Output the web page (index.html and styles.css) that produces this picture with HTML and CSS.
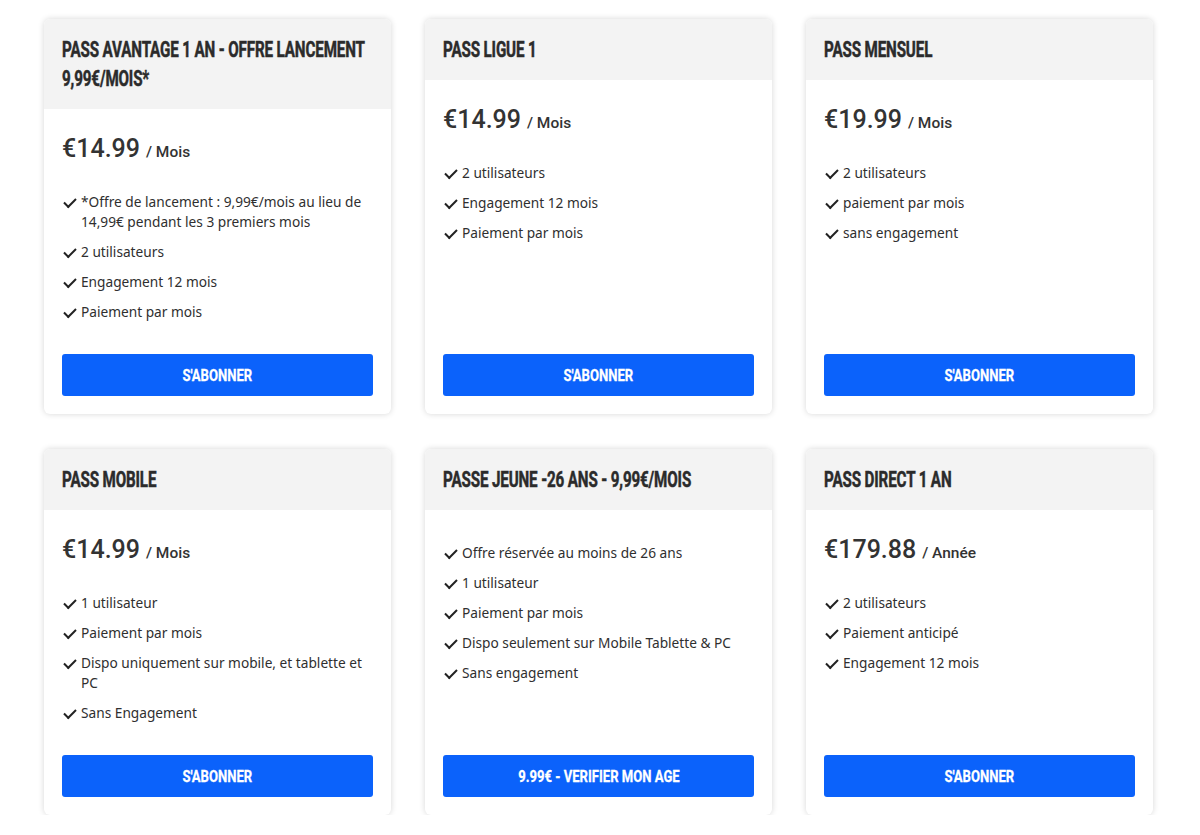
FILE: index.html
```html
<!DOCTYPE html>
<html lang="fr">
<head>
<meta charset="utf-8">
<title>Offres</title>
<link rel="stylesheet" href="styles.css">
</head>
<body>
<main class="grid">
  <section class="card">
    <h2 class="card-title"><span class="title-text">PASS AVANTAGE 1 AN - OFFRE LANCEMENT 9,99€/MOIS*</span></h2>
    <div class="card-body">
      <p class="price"><span class="amount">€14.99</span> <span class="period">/ Mois</span></p>
      <ul class="features">
        <li>*Offre de lancement : 9,99€/mois au lieu de 14,99€ pendant les 3 premiers mois</li>
        <li>2 utilisateurs</li>
        <li>Engagement 12 mois</li>
        <li>Paiement par mois</li>
      </ul>
      <button class="cta"><span class="cta-text">S'ABONNER</span></button>
    </div>
  </section>
  <section class="card">
    <h2 class="card-title"><span class="title-text">PASS LIGUE 1</span></h2>
    <div class="card-body">
      <p class="price"><span class="amount">€14.99</span> <span class="period">/ Mois</span></p>
      <ul class="features">
        <li>2 utilisateurs</li>
        <li>Engagement 12 mois</li>
        <li>Paiement par mois</li>
      </ul>
      <button class="cta"><span class="cta-text">S'ABONNER</span></button>
    </div>
  </section>
  <section class="card">
    <h2 class="card-title"><span class="title-text">PASS MENSUEL</span></h2>
    <div class="card-body">
      <p class="price"><span class="amount">€19.99</span> <span class="period">/ Mois</span></p>
      <ul class="features">
        <li>2 utilisateurs</li>
        <li>paiement par mois</li>
        <li>sans engagement</li>
      </ul>
      <button class="cta"><span class="cta-text">S'ABONNER</span></button>
    </div>
  </section>
  <section class="card">
    <h2 class="card-title"><span class="title-text">PASS MOBILE</span></h2>
    <div class="card-body">
      <p class="price"><span class="amount">€14.99</span> <span class="period">/ Mois</span></p>
      <ul class="features">
        <li>1 utilisateur</li>
        <li>Paiement par mois</li>
        <li>Dispo uniquement sur mobile, et tablette et PC</li>
        <li>Sans Engagement</li>
      </ul>
      <button class="cta"><span class="cta-text">S'ABONNER</span></button>
    </div>
  </section>
  <section class="card">
    <h2 class="card-title"><span class="title-text">PASSE JEUNE -26 ANS - 9,99€/MOIS</span></h2>
    <div class="card-body card-body--noprice">
      <ul class="features">
        <li>Offre réservée au moins de 26 ans</li>
        <li>1 utilisateur</li>
        <li>Paiement par mois</li>
        <li>Dispo seulement sur Mobile Tablette &amp; PC</li>
        <li>Sans engagement</li>
      </ul>
      <button class="cta"><span class="cta-text">9.99€ - VERIFIER MON AGE</span></button>
    </div>
  </section>
  <section class="card">
    <h2 class="card-title"><span class="title-text">PASS DIRECT 1 AN</span></h2>
    <div class="card-body">
      <p class="price"><span class="amount">€179.88</span> <span class="period">/ Année</span></p>
      <ul class="features">
        <li>2 utilisateurs</li>
        <li>Paiement anticipé</li>
        <li>Engagement 12 mois</li>
      </ul>
      <button class="cta"><span class="cta-text">S'ABONNER</span></button>
    </div>
  </section>
</main>
</body>
</html>
```
FILE: styles.css
```css
* { box-sizing: border-box; }
html, body { margin: 0; padding: 0; background: #ffffff; }
body {
  font-family: "Noto Sans", "Open Sans", sans-serif;
  color: #333333;
}
.grid {
  display: grid;
  grid-template-columns: repeat(3, 347px);
  column-gap: 34px;
  row-gap: 35px;
  padding: 19px 0 0 44px;
}
.card {
  display: flex;
  flex-direction: column;
  background: #ffffff;
  border-radius: 6px;
  box-shadow: 0 0 6px rgba(0, 0, 0, 0.16);
  overflow: hidden;
}
.card-title {
  margin: 0;
  background: #f3f3f3;
  padding: 16px 18px;
  font-family: Roboto, "Liberation Sans", sans-serif;
  font-weight: 700;
  font-size: 22px;
  line-height: 29px;
  color: #2b2b2b;
  overflow: hidden;
}
.title-text {
  display: block;
  width: 145%;
  transform: scaleX(0.69);
  transform-origin: left top;
  letter-spacing: -0.2px;
  -webkit-text-stroke: 0.5px #2b2b2b;
}
.card-body {
  flex: 1;
  display: flex;
  flex-direction: column;
  padding: 24px 18px 18px;
}
.card-body--noprice { padding-top: 33px; }
.price {
  margin: 0 0 24px;
  line-height: 32px;
  font-family: Roboto, "Liberation Sans", sans-serif;
  color: #333333;
}
.amount { font-size: 25px; font-weight: 500; }
.period { font-size: 15.5px; font-weight: 500; margin-left: 2px; }
.features {
  list-style: none;
  margin: 0 0 32px;
  padding: 0;
}
.features li {
  position: relative;
  padding-left: 19px;
  font-size: 13.7px;
  line-height: 20px;
  margin-bottom: 10px;
  color: #2f2f2f;
}
.features li:last-child { margin-bottom: 0; }
.features li::before {
  content: "";
  position: absolute;
  left: 2px;
  top: 6px;
  width: 10px;
  height: 5px;
  border-left: 2px solid #222222;
  border-bottom: 2px solid #222222;
  transform: rotate(-45deg);
}
.cta {
  margin-top: auto;
  width: 100%;
  height: 42px;
  border: none;
  border-radius: 3px;
  background: #0b62fb;
  color: #ffffff;
  font-family: Roboto, "Liberation Sans", sans-serif;
  font-weight: 700;
  font-size: 17px;
  cursor: pointer;
  display: flex;
  align-items: center;
  justify-content: center;
  padding: 0;
}
.cta-text {
  display: inline-block;
  transform: scaleX(0.77);
  white-space: nowrap;
  -webkit-text-stroke: 0.3px #ffffff;
}
```
